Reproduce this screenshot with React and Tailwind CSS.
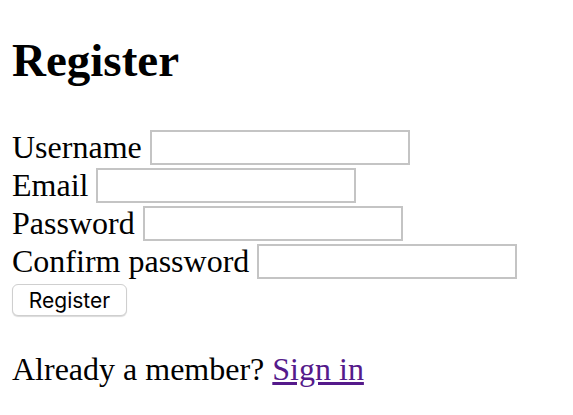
import React from 'react';

const serif = { fontFamily: '"Liberation Serif", "Times New Roman", serif' };

const Field = ({ label, type = 'text' }) => (
  <label className="flex h-[38px] items-center gap-[8px] text-[32px] text-black">
    <span>{label}</span>
    <input
      type={type}
      className="h-[35px] w-[260px] border-2 border-[#c4c4c4] bg-white px-1 outline-none"
    />
  </label>
);

export default function App() {
  return (
    <div className="min-h-screen bg-white px-[12px] text-black" style={serif}>
      <section className="pt-[32px]">
        <h1 className="text-[47px] leading-[56px] font-bold">Register</h1>

        <form className="mt-[40px] flex flex-col" onSubmit={(e) => e.preventDefault()}>
          <Field label="Username" />
          <Field label="Email" type="email" />
          <Field label="Password" type="password" />
          <Field label="Confirm password" type="password" />
          <div className="mt-[4px]">
            <button
              type="submit"
              className="h-[32px] w-[115px] rounded-[6px] border border-[#cfcfcf] bg-white font-['Inter',sans-serif] text-[21px] text-black shadow-[0_1px_1px_rgba(0,0,0,0.15)]"
            >
              Register
            </button>
          </div>
        </form>

        <p className="mt-[29px] text-[32px]">
          Already a member?{' '}
          <a href="#" className="text-[#551a8b] underline">
            Sign in
          </a>
        </p>
      </section>
    </div>
  );
}
